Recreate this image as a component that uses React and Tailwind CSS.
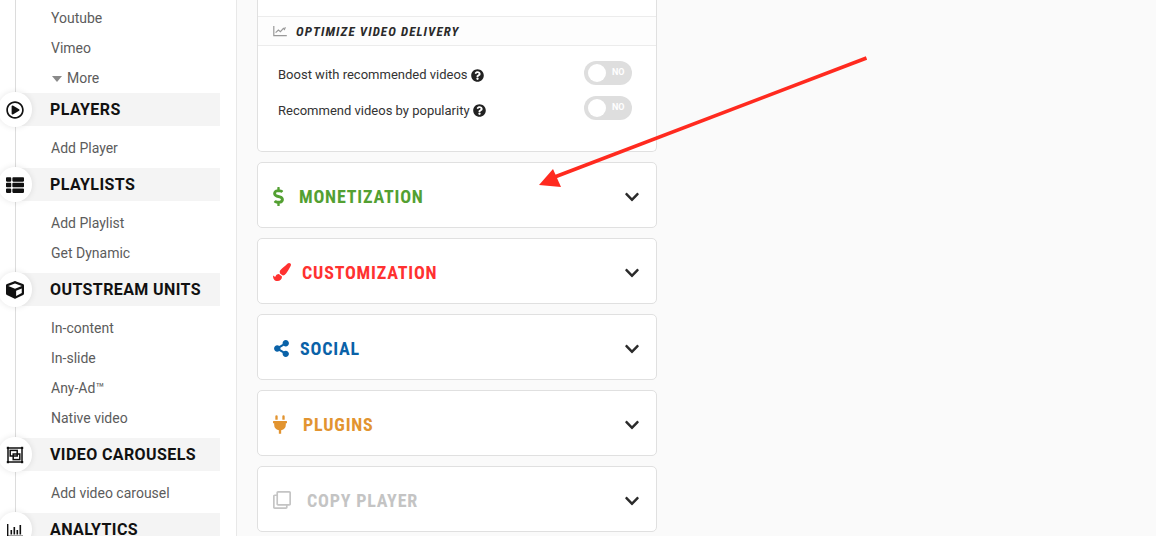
import React from "react";
import { FaRegPlayCircle, FaThList, FaCube, FaDollarSign, FaPaintBrush, FaShareAlt, FaPlug, FaRegClone, FaChevronDown, FaQuestionCircle } from "react-icons/fa";

const CarouselIcon = () => (
  <svg width="18" height="18" viewBox="0 0 18 18" fill="none" stroke="#111" strokeWidth="1.5">
    <rect x="2" y="2" width="14" height="14" />
    <rect x="4.2" y="4.4" width="7" height="5.6" />
    <rect x="7.2" y="8" width="6.6" height="5.6" />
    <rect x="0.8" y="0.8" width="2.2" height="2.2" fill="#111" stroke="none" />
    <rect x="15" y="0.8" width="2.2" height="2.2" fill="#111" stroke="none" />
    <rect x="0.8" y="15" width="2.2" height="2.2" fill="#111" stroke="none" />
    <rect x="15" y="15" width="2.2" height="2.2" fill="#111" stroke="none" />
  </svg>
);
const BarsIcon = () => (
  <svg width="18" height="18" viewBox="0 0 18 18" fill="#111">
    <rect x="1" y="3" width="1.4" height="13" />
    <rect x="1" y="14.6" width="16" height="1.4" />
    <rect x="4.5" y="9" width="1.6" height="4.5" />
    <rect x="7.5" y="6" width="1.6" height="7.5" />
    <rect x="10.5" y="9" width="1.6" height="4.5" />
    <rect x="13.5" y="4" width="1.6" height="9.5" />
  </svg>
);
const LineChartIcon = () => (
  <svg width="14" height="12" viewBox="0 0 14 12" fill="none" stroke="#999" strokeWidth="1.2">
    <path d="M.8 1v9.6h13" />
    <path d="M2.6 7.6 5.4 5l2 1.6 3-3.2 1 1 1-2.2" />
  </svg>
);

function Head({ icon, label }) {
  return (
    <div className="relative h-[33px] ml-[15px] w-[205px] bg-[#f4f4f4] flex items-center">
      <div className="absolute left-[-17px] top-[-1px] w-[34px] h-[35px] rounded-full bg-white shadow-[0_0_6px_rgba(0,0,0,0.1)] flex items-center justify-center text-[#111]">
        {icon}
      </div>
      <span className="ml-[35px] text-[16px] font-bold tracking-[0.4px] text-[#111] whitespace-nowrap">{label}</span>
    </div>
  );
}
function Item({ children }) {
  return <div className="h-[30px] flex items-center pl-[51px] text-[14px] text-[#5c5c5c] whitespace-nowrap">{children}</div>;
}
function Group({ icon, label, items }) {
  return (
    <div>
      <Head icon={icon} label={label} />
      {items && (
        <div className="pt-[7px] pb-[5px]">
          {items.map((i) => <Item key={i}>{i}</Item>)}
        </div>
      )}
    </div>
  );
}
function Toggle() {
  return (
    <div className="w-[48px] h-[24px] rounded-full bg-[#dedede] flex items-center shrink-0">
      <div className="w-[18px] h-[18px] rounded-full bg-white ml-[4px]" />
      <span className="ml-[6px] text-[9px] font-bold text-white">NO</span>
    </div>
  );
}
function QA({ children, icon }) {
  return (
    <span className={`flex items-center text-[13px] text-[#333] ${icon}`}>
      {children}
      <FaQuestionCircle size={13} className="ml-[3px] text-[#222]" />
    </span>
  );
}
function Accordion({ icon, label, color, gap }) {
  return (
    <div className="h-[66px] w-[400px] shrink-0 rounded-[5px] border border-[#e0e0e0] bg-white flex items-center pl-[15px] pr-[16px] pt-[2px]">
      <span className="flex items-center" style={{ color }}>{icon}</span>
      <span
        className="text-[18px] font-bold tracking-[0.8px] font-stretch-condensed"
        style={{ color, marginLeft: gap, fontFamily: '"Roboto Condensed", Roboto, sans-serif' }}
      >
        {label}
      </span>
      <FaChevronDown className="ml-auto mt-[2px] text-[#2b2b2b]" size={16} />
    </div>
  );
}

export default function App() {
  return (
    <div className="relative w-[1156px] h-[536px] overflow-hidden bg-[#fafafa] flex font-['Roboto',sans-serif]">
      <aside className="relative w-[237px] h-full shrink-0 bg-white border-r border-[#e8e8e8] pt-[3px] overflow-hidden">
        <div className="absolute left-[15px] top-0 bottom-0 w-px bg-[#dcdcdc]" />
        <div className="relative">
          <Item>Youtube</Item>
          <Item>Vimeo</Item>
          <div className="h-[30px] flex items-center pl-[52px] text-[14px] text-[#5c5c5c]">
            <svg width="10" height="6" viewBox="0 0 10 6" className="mr-[5px] mt-[2px]"><path d="M0 0h10L5 6Z" fill="#8a8a8a" /></svg>
            More
          </div>
          <Group icon={<FaRegPlayCircle size={18} />} label="PLAYERS" items={["Add Player"]} />
          <Group icon={<FaThList size={18} />} label="PLAYLISTS" items={["Add Playlist", "Get Dynamic"]} />
          <Group icon={<FaCube size={18} />} label="OUTSTREAM UNITS" items={["In-content", "In-slide", "Any-Ad™", "Native video"]} />
          <Group icon={<CarouselIcon />} label="VIDEO CAROUSELS" items={["Add video carousel"]} />
          <Group icon={<BarsIcon />} label="ANALYTICS" />
        </div>
      </aside>

      <main className="pl-[20px] flex flex-col gap-[10px]">
        <section className="w-[400px] h-[152px] shrink-0 rounded-b-[5px] border border-t-0 border-[#e0e0e0] bg-white">
          <div className="mt-[16px] h-[30px] border-y border-[#ececec] bg-[#fdfdfd] flex items-center pl-[15px]">
            <LineChartIcon />
            <span
              className="ml-[9px] mt-[1px] text-[13px] font-bold italic tracking-[1.1px] text-[#2a2a2a] font-stretch-condensed"
              style={{ fontFamily: '"Roboto Condensed", Roboto, sans-serif' }}
            >
              OPTIMIZE VIDEO DELIVERY
            </span>
          </div>
          <div className="pl-[20px] pr-[24px] pt-[15px] flex flex-col gap-[11px]">
            <div className="h-[24px] flex items-center justify-between">
              <QA icon="mt-[4px]">Boost with recommended videos</QA>
              <Toggle />
            </div>
            <div className="h-[24px] flex items-center justify-between">
              <QA icon="mt-[5px]">Recommend videos by popularity</QA>
              <Toggle />
            </div>
          </div>
        </section>
        <Accordion icon={<FaDollarSign className="w-[11px] h-[19px]" />} label="MONETIZATION" color="#53a032" gap={15} />
        <Accordion icon={<FaPaintBrush size={18} />} label="CUSTOMIZATION" color="#ff3130" gap={11} />
        <Accordion icon={<FaShareAlt size={17} />} label="SOCIAL" color="#0a62a8" gap={10} />
        <Accordion icon={<FaPlug className="w-[14px] h-[19px]" />} label="PLUGINS" color="#e29430" gap={16} />
        <Accordion icon={<FaRegClone size={18} />} label="COPY PLAYER" color="#c4c4c4" gap={16} />
      </main>

      <svg className="absolute left-0 top-0 pointer-events-none" width="1156" height="536" viewBox="0 0 1156 536">
        <path d="M866.5 58 552 178" stroke="#ff2a1f" strokeWidth="3.6" fill="none" />
        <path d="M539 185 553 169 561 187Z" fill="#ff2a1f" />
      </svg>
    </div>
  );
}
